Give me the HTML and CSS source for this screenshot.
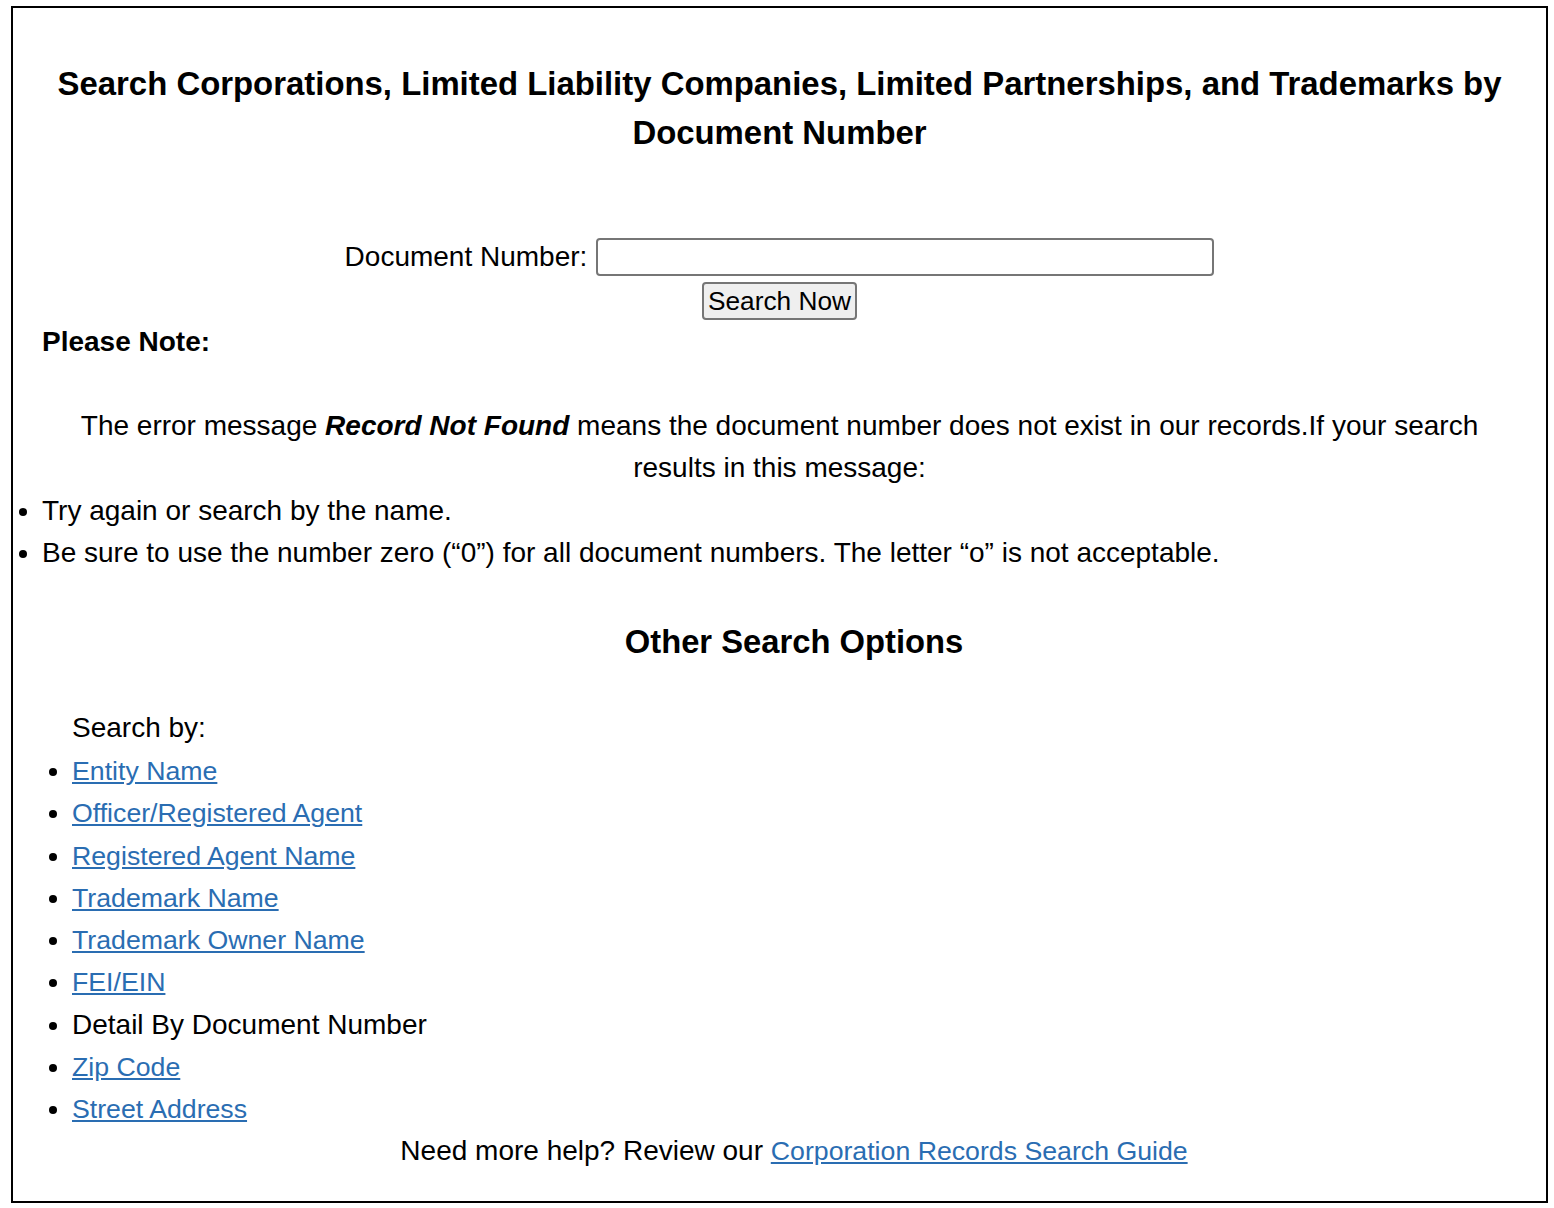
FILE: index.html
```html
<!DOCTYPE html>
<html lang="en">
<head>
  <meta charset="UTF-8" />
  <title>Search by Document Number</title>
  <link rel="stylesheet" href="styles.css">
</head>
<body>

<div class="frame">
  <h3 class="title">Search Corporations, Limited Liability Companies, Limited Partnerships, and Trademarks by Document Number</h3>

  <form class="search-form" action="#" onsubmit="return false;">
    <div class="field-row">
      <label for="docNumber">Document Number:</label>
      <input type="text" id="docNumber" name="docNumber">
    </div>
    <button type="submit" class="btn-search">Search Now</button>
  </form>

  <div class="note">
    <p class="note-label"><strong>Please Note:</strong></p>
    <p class="note-text">The error message <strong><em>Record Not Found</em></strong> means the document number does not exist in our records.If your search results in this message:</p>
    <ul class="note-list">
      <li>Try again or search by the name.</li>
      <li>Be sure to use the number zero (“0”) for all document numbers. The letter “o” is not acceptable.</li>
    </ul>
  </div>

  <div class="other">
    <h3 class="other-title">Other Search Options</h3>
    <p class="search-by">Search by:</p>
    <ul class="options">
      <li><a href="#">Entity Name</a></li>
      <li><a href="#">Officer/Registered Agent</a></li>
      <li><a href="#">Registered Agent Name</a></li>
      <li><a href="#">Trademark Name</a></li>
      <li><a href="#">Trademark Owner Name</a></li>
      <li><a href="#">FEI/EIN</a></li>
      <li>Detail By Document Number</li>
      <li><a href="#">Zip Code</a></li>
      <li><a href="#">Street Address</a></li>
    </ul>
    <p class="help">Need more help? Review our <a href="#">Corporation Records Search Guide</a></p>
  </div>
</div>

</body>
</html>
```

FILE: styles.css
```css
* { margin: 0; padding: 0; box-sizing: border-box; }

body {
  font-family: 'Liberation Sans', Arial, sans-serif;
  font-size: 28px;
  line-height: 42px;
  color: #000;
  background: #fff;
}

a {
  font-size: 26.7px;
  color: #2a6db2;
  text-decoration: underline;
}

/* Cadre principal */
.frame {
  width: 1537px;
  margin: 6px 0 0 11px;
  border: 2px solid #000;
  padding-bottom: 29px;
}

.title {
  font-size: 32.9px;
  line-height: 49px;
  font-weight: bold;
  text-align: center;
  margin-top: 50.5px;
}

/* Formulaire de recherche */
.search-form {
  margin-top: 79.5px;
}

.field-row {
  display: flex;
  justify-content: center;
  align-items: center;
  gap: 9px;
  height: 42px;
}

.field-row input {
  width: 618px;
  height: 38px;
  border: 2px solid #767676;
  border-radius: 4px;
  font: inherit;
  padding: 0 4px;
}

.btn-search {
  display: block;
  margin: 4px auto 0;
  height: 38px;
  padding: 0 4px;
  font-family: inherit;
  font-size: 26.25px;
  color: #000;
  background: #efefef;
  border: 2px solid #767676;
  border-radius: 4px;
}

/* Remarque */
.note {
  padding: 0 29px;
  margin-top: 1px;
}

.note-text {
  text-align: center;
  margin-top: 42px;
}

.note-list {
  list-style: disc outside;
  margin-top: 1px;
}

/* Autres options */
.other {
  padding-left: 29px;
  margin-top: 42.5px;
}

.other-title {
  font-size: 32.76px;
  line-height: 49px;
  font-weight: bold;
  text-align: center;
}

.search-by {
  padding-left: 30px;
  margin-top: 41.5px;
}

.options {
  padding-left: 30px;
  margin-top: 1px;
  line-height: 42.25px;
}

.help {
  text-align: center;
}
```
